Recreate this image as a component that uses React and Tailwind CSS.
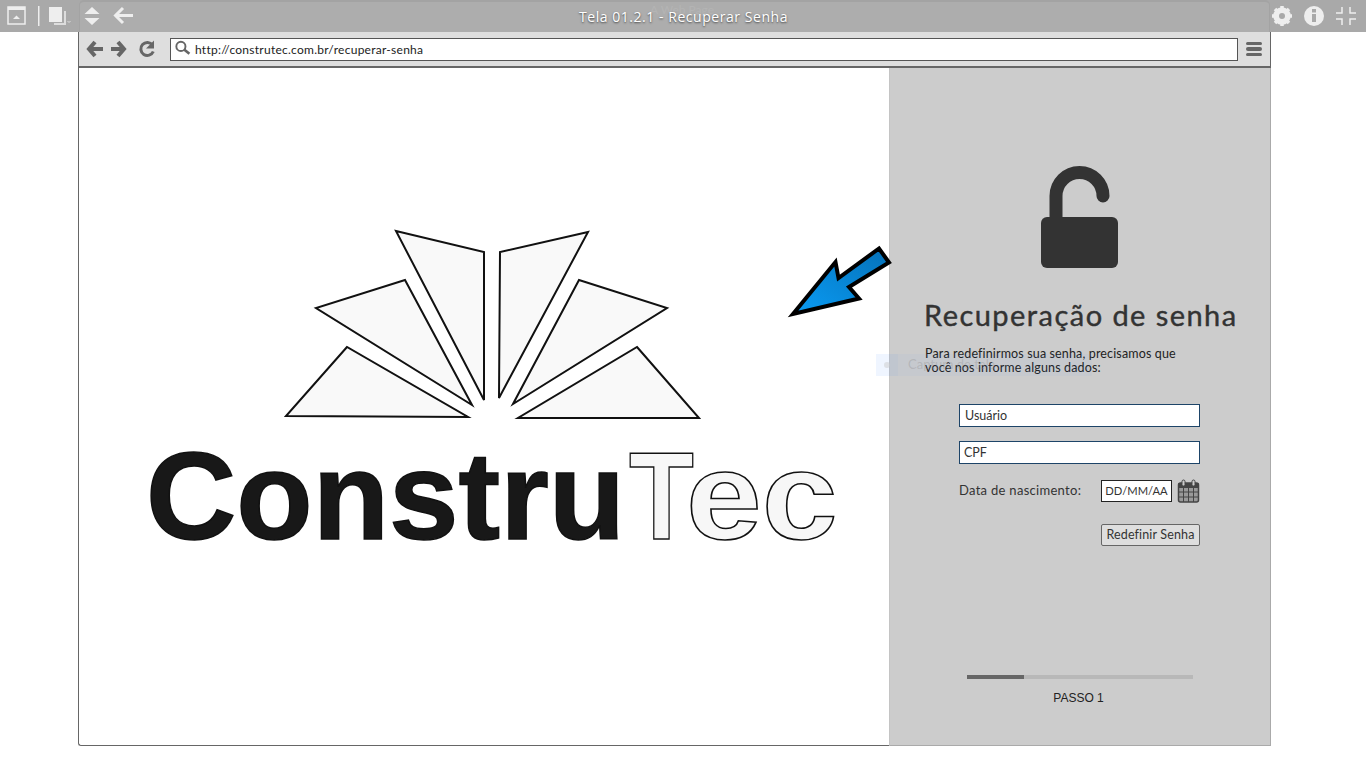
const sans = { fontFamily: '"Lato", "Noto Sans", sans-serif' };
const arial = { fontFamily: '"Liberation Sans", Arial, sans-serif' };

function WindowBar() {
  return (
    <div className="absolute inset-x-0 top-0 h-8 bg-[#a9a9a9]">
      <div className="ml-[79px] w-[1191px] h-full bg-[#adadad] border-t-2 border-x border-[#a3a3a3] rounded-t-[5px]" />
      {/* left icons */}
      <svg className="absolute left-0 top-0" width="140" height="32" viewBox="0 0 140 32">
        <rect x="8" y="7" width="17" height="17" fill="none" stroke="#eee" strokeWidth="1.5" />
        <rect x="8" y="7" width="17" height="3" fill="#eee" />
        <path d="M13 19l3.5-3.5 3.5 3.5z" fill="#eee" />
        <rect x="38" y="6" width="1.5" height="20" fill="#eee" />
        <rect x="49" y="7" width="13" height="15" fill="#eee" />
        <path d="M64 11h2v14h-12v-2h10z" fill="#ddd" />
        <path d="M67.500 21l1.500 1.500 1.500-1.500" fill="none" stroke="#ddd" />
        <path d="M92 7l7.500 7h-15zM92 25l7.500-7h-15z" fill="#eee" />
        <path d="M123 8l-7.500 7.500 7.500 7.500M116 15.500h17" fill="none" stroke="#eee" strokeWidth="3" />
      </svg>
      {/* right icons */}
      <svg className="absolute left-[1270px] top-0" width="96" height="32" viewBox="0 0 96 32">
        <circle cx="12" cy="16" r="6.500" fill="none" stroke="#eee" strokeWidth="4.500" />
        <path d="M12 6v20M2 16h20M5 9l14 14M19 9L5 23" stroke="#eee" strokeWidth="3.500" />
        <circle cx="12" cy="16" r="3" fill="#a9a9a9" />
        <circle cx="44" cy="16" r="10" fill="#eee" />
        <rect x="42" y="14" width="4" height="8" fill="#a9a9a9" />
        <rect x="42" y="9" width="4" height="3.500" fill="#a9a9a9" />
        <path d="M72 7v6h-6M80 7v6h6M72 25v-6h-6M80 25v-6h6" fill="none" stroke="#eee" strokeWidth="1.500" />
      </svg>
      <div className="absolute left-[650px] top-[1px] text-[12px] text-[#b4b4b4]" style={sans}>A Web Page</div>
      <div
        className="absolute inset-x-0 top-0 h-8 flex items-center justify-center pl-[1px] text-[14px] tracking-[0.54px] text-white [text-shadow:0_1px_2px_#444]"
        style={{ fontFamily: '"Open Sans", "Noto Sans", sans-serif' }}
      >
        Tela 01.2.1 - Recuperar Senha
      </div>
    </div>
  );
}

function Toolbar() {
  return (
    <div className="h-9 bg-[#dedede] border-b-2 border-r border-[#666] flex items-center">
      <svg className="shrink-0" width="91" height="34" viewBox="0 0 91 34">
        <path d="M16 10l-6 7 6 7M10 17h14" fill="none" stroke="#666" strokeWidth="4" />
        <path d="M39 10l6 7-6 7M45 17H32" fill="none" stroke="#666" strokeWidth="4" />
        <path d="M73.500 13a6.500 6.500 0 1 0 0.800 6.500" fill="none" stroke="#666" strokeWidth="3" />
        <path d="M75 8.500v8h-8z" fill="#666" />
      </svg>
      <div className="w-[1068px] h-[23px] bg-white border border-[#555] flex items-center pl-[3px]">
        <svg width="17" height="17" viewBox="0 0 16 16" className="-mt-[2px]">
          <circle cx="6.500" cy="6" r="4.300" fill="none" stroke="#666" strokeWidth="1.800" />
          <path d="M9.500 9l5 4" stroke="#666" strokeWidth="2.500" />
        </svg>
        <span className="ml-[4px] pt-[2px] text-[12px] tracking-[0.26px] text-[#222]" style={sans}>http://construtec.com.br/recuperar-senha</span>
      </div>
      <div className="ml-[8px] flex flex-col gap-[2px]">
        <div className="w-4 h-[3.500px] rounded-full bg-[#666]" />
        <div className="w-4 h-[3.500px] rounded-full bg-[#666]" />
        <div className="w-4 h-[3.500px] rounded-full bg-[#666]" />
      </div>
    </div>
  );
}

function Logo() {
  const blades = [
    '396,231 484,252 484,400',
    '405,280 316,308 472,405',
    '347,347 286,416 468,417',
    '588,232 500,252 499,398',
    '579,280 667,308 513,404',
    '637,347 699,418 518,418',
  ];
  return (
    <div className="absolute left-0 top-0 w-[810px] h-[677px]">
      <svg className="absolute -left-[79px] -top-[68px]" width="889" height="480" viewBox="0 0 889 480">
        {blades.map(p => (
          <polygon key={p} points={p} fill="#f9f9f9" stroke="#111" strokeWidth="2" strokeLinejoin="miter" />
        ))}
      </svg>
      <div
        className="absolute left-[67px] top-[353px] text-[125px] leading-[150px] font-bold whitespace-nowrap text-[#181818] [-webkit-text-stroke:1.500px_#111]"
        style={arial}
      >
        Constru
        <span className="inline-block ml-[4px] text-[#f7f7f7] origin-left scale-x-[0.85] -mr-[20px]">T</span>
        <span className="inline-block text-[#f7f7f7] origin-left scale-x-[1.09]">ec</span>
      </div>
    </div>
  );
}

function FormPanel() {
  return (
    <div className="relative w-[382px] -mb-px bg-[#cccccc] border-l border-[#c4c4c4] border-r border-r-[#aaa] border-b border-b-[#aaa] flex flex-col text-[#333]" style={sans}>
      <svg className="ml-[150px] mt-[96px]" width="80" height="106" viewBox="0 0 80 106">
        <path d="M16 56V32a23.500 23.500 0 0 1 47 0" fill="none" stroke="#333" strokeWidth="13" strokeLinecap="round" />
        <rect x="1" y="53" width="77" height="51" rx="6" fill="#333" />
      </svg>
      <h1 className="ml-[34px] mt-[27px] text-[29px] leading-[36px] tracking-[1.45px] text-[#333] font-normal [-webkit-text-stroke:0.4px_#333]">Recuperação de senha</h1>
      <p className="ml-[35px] mt-[14px] text-[12.500px] leading-[14px] tracking-[0.14px] text-[#222]">
        Para redefinirmos sua senha, precisamos que<br />você nos informe alguns dados:
      </p>
      <div className="ml-[69px] mt-[29px] w-[241px] flex flex-col">
        <div className="h-[23px] bg-white border border-[#1d4468] pl-[5px] pt-[1px] flex items-center text-[12.500px]">Usuário</div>
        <div className="mt-[14px] h-[23px] bg-white border border-[#1d4468] pl-[4px] pt-[1px] flex items-center text-[12.500px]">CPF</div>
        <div className="mt-[15px] h-[24px] flex items-center">
          <span className="text-[13px] tracking-[0.29px] text-[#333]">Data de nascimento:</span>
          <div className="ml-auto h-[22px] w-[71px] bg-white border border-[#222] flex items-center justify-center text-[11.200px]">DD/MM/AA</div>
          <svg className="ml-[5px] shrink-0" width="23" height="24" viewBox="0 0 23 24">
            <rect x="1.500" y="4" width="20" height="19" rx="2" fill="#999" stroke="#444" strokeWidth="1.500" />
            <rect x="1.500" y="4" width="20" height="5" fill="#444" />
            <path d="M1.500 13h20M1.500 18h20M6.500 9v14M11.500 9v14M16.500 9v14" stroke="#444" strokeWidth="1" />
            <rect x="5" y="1" width="3" height="6" rx="1.500" fill="#ccc" stroke="#444" />
            <rect x="15" y="1" width="3" height="6" rx="1.500" fill="#ccc" stroke="#444" />
          </svg>
        </div>
        <button className="self-end mt-[21px] w-[99px] h-[22px] bg-[#dedede] border border-[#666] rounded-[2px] text-[12.500px] tracking-[0.15px] text-[#333]">Redefinir Senha</button>
      </div>
      <div className="ml-[77px] mt-[129px] w-[226px] h-1 bg-[#b8b8b8]">
        <div className="w-1/4 h-full bg-[#666]" />
      </div>
      <div className="mt-[10px] text-center text-[12px] text-[#222] pr-[3px]" style={arial}>PASSO 1</div>
    </div>
  );
}

function Arrow() {
  return (
    <svg className="absolute left-[700px] top-[170px]" width="200" height="160" viewBox="700 170 200 160">
      <defs>
        <linearGradient id="arrowFill" x1="0" y1="1" x2="1" y2="0">
          <stop offset="0" stopColor="#0a9cf5" />
          <stop offset="1" stopColor="#0571b8" />
        </linearGradient>
      </defs>
      <polygon points="793,314 835.500,262 838.500,278 879,248.500 889,262.500 849,287 859,298.500" fill="url(#arrowFill)" stroke="#000" strokeWidth="4" />
    </svg>
  );
}

export default function App() {
  return (
    <div className="relative w-[1366px] h-[768px] bg-white overflow-hidden">
      <WindowBar />
      <div className="absolute left-[78px] top-8 w-[1193px] h-[714px] border-l border-b border-[#666] rounded-bl-[3px] flex flex-col">
        <Toolbar />
        <div className="relative flex-1 flex justify-end">
          <Logo />
          <FormPanel />
        </div>
      </div>
      <div className="absolute left-[876px] top-[354px] w-[216px] h-[22px] bg-[#3b82f6]/[0.04] flex items-center text-[13px] text-[#888]/30" style={sans}>
        <div className="w-[22px] h-full bg-[#3b82f6]/[0.04] flex items-center justify-center">
          <div className="w-[6px] h-[6px] rounded-full bg-[#ccc]/50" />
        </div>
        <span className="ml-[10px]">Captura de tela</span>
      </div>
      <Arrow />
    </div>
  );
}
